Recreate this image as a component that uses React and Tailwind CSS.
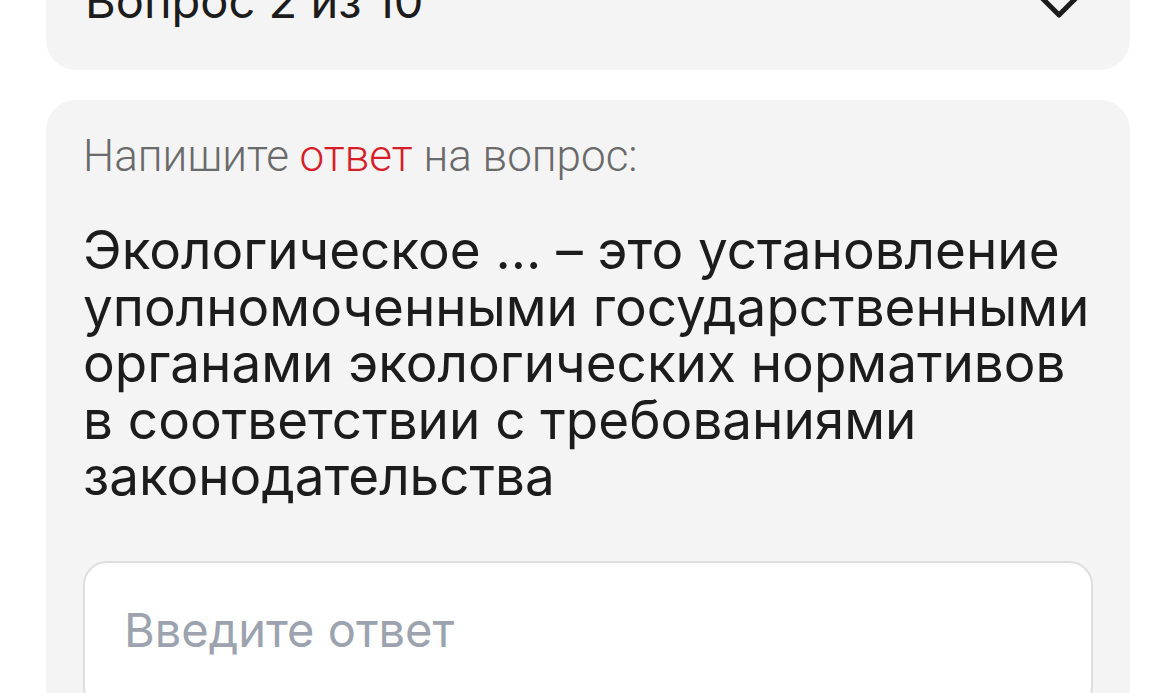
const QUESTION_LINES = [
  "Экологическое … – это установление",
  "уполномоченными государственными",
  "органами экологических нормативов",
  "в соответствии с требованиями",
  "законодательства",
];

const Chevron = () => (
  <svg width="48" height="30" viewBox="0 0 48 30" fill="none" className="mt-[12px]">
    <path
      d="M6 6 L24 24 L42 6"
      stroke="#1c1c1c"
      strokeWidth="5"
      strokeLinecap="round"
      strokeLinejoin="round"
    />
  </svg>
);

export default function App() {
  return (
    <div
      className="min-h-screen bg-white overflow-hidden pl-[46px] pr-[38px]"
      style={{ fontFamily: "Inter, 'Noto Sans', sans-serif" }}
    >
      {/* шапка вопроса */}
      <div className="-mt-[70px] h-[140px] rounded-[30px] bg-[#f4f4f4] flex items-center justify-between pl-[39px] pr-[47px]">
        <span className="text-[47px] text-[#1c1c1c] leading-none">Вопрос 2 из 10</span>
        <Chevron />
      </div>

      <div className="mt-[30px] rounded-[30px] bg-[#f4f4f4] pt-[34px] px-[37px] pb-[60px]">
        <p
          className="text-[44px] font-light text-[#6a6a6a] leading-[44px]"
          style={{ fontFamily: "Roboto, 'Noto Sans', sans-serif" }}
        >
          Напишите <span className="text-[#d71e28]">ответ</span> на вопрос:
        </p>

        <p className="mt-[44px] text-[53px] text-[#1c1c1c] leading-[56.5px]">
          {QUESTION_LINES.map((line, i) => (
            <span key={i} className="block whitespace-nowrap">
              {line}
            </span>
          ))}
        </p>

        <div className="mt-[56px] h-[150px] rounded-[24px] border-2 border-[#dedede] bg-white px-[39px] pt-[43px]">
          <span className="text-[47px] text-[#9ca3af] leading-none">Введите ответ</span>
        </div>
      </div>
    </div>
  );
}
